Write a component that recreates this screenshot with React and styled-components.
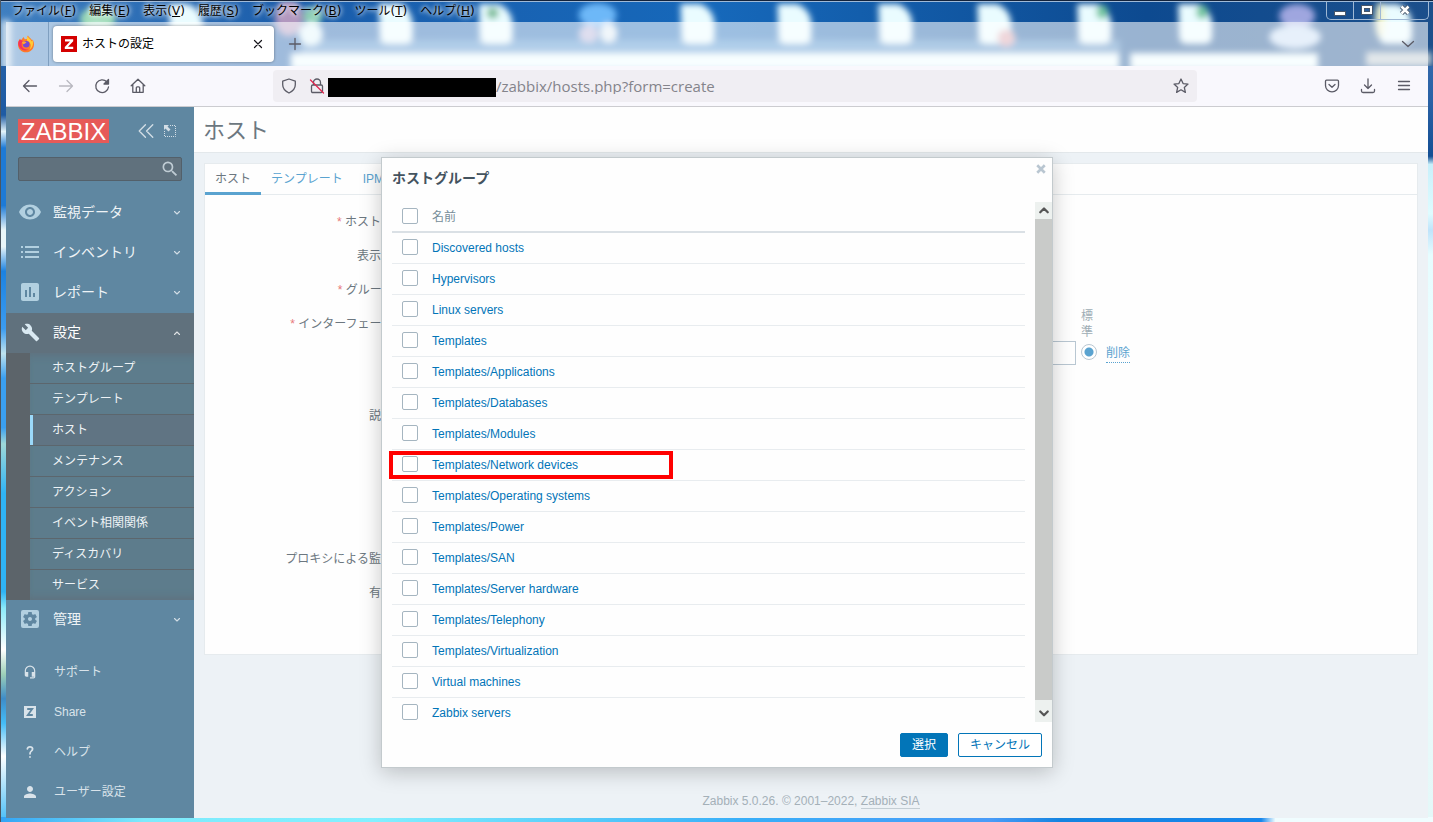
import React from 'react'
import styled, {createGlobalStyle, css} from 'styled-components'
import {
  MdAssessment,
  MdBuild,
  MdHeadsetMic,
  MdPerson,
  MdSearch,
  MdSettingsApplications,
  MdVisibility,
} from 'react-icons/md'


const theme = {
  sidebar: '#5f87a1',
  sidebarActive: '#60717d',
  sidebarSub: '#5d7c8c',
  sidebarGutter: '#5c646a',
  sidebarIcon: '#b2d0e0',
  page: '#edf2f6',
  panel: '#fefefe',
  line: '#e6ebee',
  text: '#6c7780',
  link: '#0275b8',
  linkDimmed: '#5aa3d0',
  required: '#e8797b',
  toolbar: '#f9f8fd',
  toolbarIcon: '#5b5b66',
}

const fonts = {
  page: '"Liberation Sans", "Noto Sans CJK JP", sans-serif',
  chrome: '"Open Sans", "Noto Sans CJK JP", sans-serif',
  menu: '"DejaVu Sans", "Noto Sans CJK JP", sans-serif',
}

const GlobalStyle = createGlobalStyle`
  * {
    box-sizing: border-box;
  }
  body {
    margin: 0;
    font-family: ${fonts.page};
    font-size: 12px;
    line-height: 16px;
  }
  button, input {
    font: inherit;
  }
  ul {
    list-style: none;
    margin: 0;
    padding: 0;
  }
`

const Window = styled.div`
  background:
    linear-gradient(90deg, #33a5f5, #7deafc 10%, #83f0ff 26%, #5fd3fb 38%, #38aef8 52%, #4a9cf8 69%, #1484e0 74%, #1787ec 88%, #f0fdff 89%) bottom / 100% 5px no-repeat,
    linear-gradient(#2c66ab, #1f5ba3 14%, #e4f5fa 16%, #1d7ad6 18%, #1d7ad6 25%, #e9f6f9 28%, #e9f6f9 30%, #1c82e0 33%, #3c9cf0 40%, #bfe3ee 43%, #3a9ff0 46%, #3a9ff0 52%, #9fd8d8 54%, #2fb4f6 60%, #2fb4f6 72%, #8ceafa 74%, #fff 79%, #9ed0b8 82%, #3e8cc8 85%, #45bdf7 88%, #fff 92%, #45bdf7) left / 6px 100% no-repeat,
    linear-gradient(#3f74b4, #2a62a6 12%, #144f94 19%, #c8f0fb 20%, #dffcff 26%, #bfe4fb 28%, #e6fdff 31%, #f2fcfd 60%, #e4f8f8) right / 5px 100% no-repeat;
  border-left: 1px solid #4a5661;
  display: flex;
  flex-direction: column;
  min-height: 100vh;
  padding: 0 5px 4px;
`

// Glass title area

const Glass = styled.header`
  margin: 0 -5px;
  position: relative;
`

const Wallpaper = styled.svg`
  display: block;
  height: 100%;
  left: 0;
  position: absolute;
  top: 0;
  width: 100%;
`

const MenuBar = styled.nav`
  align-items: flex-start;
  display: flex;
  height: 22px;
  padding: 0 0 0 11px;
  position: relative;
`

const MenuButton = styled.button`
  background: none;
  border: 0;
  color: #000;
  font-family: ${fonts.menu};
  height: 22px;
  line-height: 22px;
  margin-right: 13px;
  padding: 0;
  text-shadow: 0 0 4px #fff, 0 0 6px #fff;
`

const WindowButtons = styled.div`
  border: 1px solid #9fb8d4;
  border-radius: 0 0 5px 5px;
  border-top: 0;
  display: flex;
  height: 19px;
  margin: 1px 4px 0 auto;
`

const WindowButton = styled.button`
  align-items: center;
  background: none;
  border: 0;
  border-right: 1px solid #9fb8d4;
  display: flex;
  justify-content: center;
  padding: 0;
  width: ${props => props.$wide ? '47px' : '27px'};
  &:last-child {
    border-right: 0;
  }
`

const TabStrip = styled.div`
  align-items: center;
  background: rgba(255, 255, 255, 0.58);
  display: flex;
  height: 44px;
  margin: 0 5px;
  position: relative;
`

const PinnedTab = styled.button`
  background: none;
  border: 0;
  border-right: 1px solid #7f9fc0;
  height: 44px;
  padding: 0;
  width: 43px;
  & svg {
    display: block;
    margin: 0 0 0 11px;
  }
`

const Tab = styled.div`
  align-items: center;
  background: #fff;
  border-radius: 4px;
  box-shadow: 0 0 3px rgba(0, 0, 0, 0.4);
  display: flex;
  font-family: ${fonts.menu};
  gap: 5px;
  height: 36px;
  margin-left: 4px;
  padding: 0 8px;
  width: 221px;
`

const Favicon = styled.svg`
  background: #d40000;
  flex: none;
`

const PlainButton = styled.button`
  align-items: center;
  background: none;
  border: 0;
  color: ${props => props.$color || theme.toolbarIcon};
  display: flex;
  flex: none;
  height: ${props => props.$size || 32}px;
  justify-content: center;
  margin-left: ${props => props.$push ? 'auto' : 0};
  padding: 0;
  width: ${props => props.$size || 32}px;
  &:disabled {
    opacity: 0.4;
  }
`

const TabTitle = styled.span`
  flex: 1;
  line-height: 18px;
`

const Toolbar = styled.div`
  align-items: center;
  background: ${theme.toolbar};
  border-bottom: 1px solid #ccccd0;
  display: flex;
  gap: 4px;
  height: 41px;
  padding: 0 8px;
`

const AddressBar = styled.div`
  align-items: center;
  background: #f0eef3;
  border-radius: 4px;
  display: flex;
  flex: 1;
  height: 32px;
  margin: 0 115px;
`

const Redacted = styled.div`
  background: #000;
  flex: none;
  height: 19px;
  margin-top: 2px;
  width: 168px;
`

const AddressInput = styled.input`
  background: none;
  border: 0;
  color: #84848b;
  flex: 1;
  font-family: ${fonts.chrome};
  font-size: 15px;
  min-width: 0;
  outline: none;
  padding: 0;
`

// Page

const Page = styled.div`
  display: flex;
  flex: 1;
  position: relative;
`

const Sidebar = styled.aside`
  background: ${theme.sidebar};
  color: #eef3f6;
  flex: none;
  padding-bottom: 6px;
  width: 188px;
`

const SidebarHead = styled.div`
  align-items: center;
  display: flex;
  height: 50px;
  padding: 0 12px 2px;
  & ${PlainButton} {
    color: #d3dee6;
  }
`

const Logo = styled.a`
  background: #e65a58;
  color: #fff;
  flex: none;
  font-size: 24px;
  height: 24px;
  line-height: 25px;
  margin-right: 25px;
  text-align: center;
  text-decoration: none;
  width: 91px;
`

const Search = styled.form`
  align-items: center;
  background: ${theme.sidebarActive};
  border: 1px solid #53606a;
  border-radius: 2px;
  display: flex;
  height: 24px;
  margin: 0 12px 12px;
  & input {
    background: none;
    border: 0;
    color: #fff;
    flex: 1;
    min-width: 0;
    outline: none;
  }
  & ${PlainButton} {
    color: #bfccd4;
  }
`

const NavLink = styled.a`
  align-items: center;
  background: ${props => props.$active ? theme.sidebarActive : 'none'};
  color: ${props => props.$active ? '#fff' : '#eef3f6'};
  display: flex;
  font-size: 14px;
  height: 40px;
  padding: 0 13px 2px 12px;
  text-decoration: none;
  & > svg:last-child {
    margin: 2px 0 0 auto;
    opacity: 0.8;
  }
`

const IconSlot = styled.span`
  color: ${props => props.$color};
  display: flex;
  flex: none;
  justify-content: center;
  width: 24px;
`

const NavText = styled.span`
  margin-left: 11px;
`

const SubMenu = styled.ul`
  background: ${theme.sidebarSub};
  border-left: 24px solid ${theme.sidebarGutter};
  box-shadow: inset 0 8px 8px -6px ${theme.sidebarActive}, inset 0 -8px 8px -6px ${theme.sidebarActive};
`

const SubLink = styled.a`
  border-bottom: 1px solid #5c666d;
  color: #eef3f6;
  display: block;
  height: 31px;
  line-height: 31px;
  padding-left: 22px;
  text-decoration: none;
  ${props => props.$active && css`
    background: #607483;
    box-shadow: inset 3px 0 0 #9bd9fa;
  `}
  li:last-child > & {
    border-bottom: 0;
    height: 30px;
  }
`

const SupportMenu = styled.ul`
  margin-top: 12px;
`

const SupportLink = styled.a`
  align-items: center;
  color: #d9e3ea;
  display: flex;
  gap: 12px;
  height: 40px;
  padding: 0 12px;
  text-decoration: none;
`

const Main = styled.main`
  background: ${theme.page};
  color: ${theme.text};
  display: flex;
  flex: 1;
  flex-direction: column;
  min-width: 0;
`

const PageTitle = styled.h1`
  background: ${theme.panel};
  border-bottom: 1px solid #e3e8eb;
  font-size: 22px;
  font-weight: 400;
  height: 46px;
  line-height: 48px;
  margin: 0 0 10px;
  padding: 0 9px;
`

const Panel = styled.section`
  background: ${theme.panel};
  border: 1px solid ${theme.line};
  margin: 0 10px;
  padding-bottom: 45px;
`

const Tabs = styled.nav`
  border-bottom: 1px solid ${theme.line};
  display: flex;
  height: 31px;
  margin-bottom: 9px;
`

const FormTab = styled.a`
  border-bottom: 3px solid ${props => props.$active ? theme.linkDimmed : 'transparent'};
  color: ${props => props.$active ? theme.text : theme.linkDimmed};
  height: 31px;
  line-height: 31px;
  padding: 0 10px;
  text-decoration: none;
`

const FormRow = styled.div`
  display: flex;
  gap: 10px;
  height: ${props => props.$height || 34}px;
`

const FormLabel = styled.label`
  flex: none;
  line-height: 36px;
  text-align: right;
  width: 188px;
  white-space: nowrap;
  ${props => props.$required && css`
    &::before {
      color: ${theme.required};
      content: '* ';
    }
  `}
`

const Interface = styled.div`
  align-items: flex-end;
  display: flex;
  gap: 5px;
  height: 59px;
  width: 727px;
`

const PortInput = styled.input`
  background: #fff;
  border: 1px solid #b9c7d2;
  flex: 1;
  height: 24px;
  min-width: 0;
  padding: 0 4px;
`

const DefaultColumn = styled.label`
  align-items: center;
  color: #9fadb5;
  display: flex;
  flex-direction: column;
  gap: 4px;
  width: 16px;
  & span {
    margin-right: 4px;
    width: 12px;
  }
`

const Radio = styled.input`
  appearance: none;
  background: radial-gradient(circle, ${theme.linkDimmed} 4px, #fff 5px);
  border: 1px solid #b9c7d2;
  border-radius: 50%;
  flex: none;
  height: 16px;
  margin: 0 0 5px;
  width: 16px;
`

const RemoveLink = styled.a`
  border-bottom: 1px dotted ${theme.linkDimmed};
  color: ${theme.linkDimmed};
  line-height: 18px;
  margin: 0 0 2px 4px;
  text-decoration: none;
`

const Footer = styled.footer`
  color: #a4b0b8;
  margin-top: auto;
  padding-bottom: 9px;
  text-align: center;
  & a {
    border-bottom: 1px solid #c4ced4;
    color: inherit;
    text-decoration: none;
  }
`

// Host group dialog

const Backdrop = styled.div`
  align-items: center;
  display: flex;
  inset: 0;
  justify-content: center;
  position: absolute;
`

const Dialog = styled.div`
  background: #fefefe;
  border: 1px solid #c3cacd;
  box-shadow: 0 4px 20px rgba(0, 0, 0, 0.22);
  max-width: 100%;
  width: 672px;
`

const DialogHead = styled.div`
  display: flex;
  height: 44px;
  justify-content: space-between;
  padding: 3px 3px 0 10px;
`

const DialogTitle = styled.h2`
  color: #44535f;
  font-size: 14px;
  line-height: 20px;
  margin: 7px 0 0;
`

const ScrollArea = styled.div`
  display: flex;
  height: 520px;
`

const TableBox = styled.div`
  flex: 1;
  overflow: hidden;
  padding: 0 10px;
`

const GroupTable = styled.table`
  border-collapse: separate;
  border-spacing: 0;
  text-align: left;
  width: 100%;
  & th {
    border-bottom: 2px solid #dae0e5;
    color: #768d99;
    font-weight: 400;
    height: 31px;
    padding: 0;
  }
  & td {
    border-bottom: 1px solid #e8ecef;
    height: 31px;
    padding: 0;
    position: relative;
  }
  & th:first-child, & td:first-child {
    padding: 0 0 2px 10px;
    width: 40px;
  }
`

const GroupLink = styled.a`
  color: ${theme.link};
  text-decoration: none;
`

const Checkbox = styled.input`
  appearance: none;
  background: #fff;
  border: 1px solid #a5b5c0;
  border-radius: 2px;
  display: block;
  height: 16px;
  margin: 0;
  width: 16px;
`

const Highlight = styled.div`
  border: 4px solid #f00;
  height: 28px;
  left: -3px;
  pointer-events: none;
  position: absolute;
  top: 1px;
  width: 284px;
  z-index: 1;
`

const ScrollBar = styled.div`
  background: #c9cbc9;
  display: flex;
  flex-direction: column;
  justify-content: space-between;
  width: 17px;
`

const ScrollButton = styled.button`
  align-items: flex-end;
  background: #edf1ef;
  border: 0;
  color: #555;
  display: flex;
  height: ${props => props.$tall ? '22px' : '17px'};
  justify-content: center;
  padding: 0 0 3px;
  width: 17px;
`

const DialogButtons = styled.div`
  display: flex;
  gap: 10px;
  justify-content: flex-end;
  padding: 11px 10px 10px;
`

const Button = styled.button`
  background: ${props => props.$primary ? theme.link : '#fff'};
  border: 1px solid ${theme.link};
  border-radius: 2px;
  color: ${props => props.$primary ? '#fff' : theme.link};
  height: 24px;
  line-height: 22px;
  padding: 0 11px;
`


const Stroke = ({size = 16, width = 1.3, children, ...rest}) => (
  <svg width={size} height={size} viewBox="0 0 16 16" fill="none" stroke="currentColor"
    strokeWidth={width} strokeLinecap="round" strokeLinejoin="round" {...rest}>
    {children}
  </svg>
)

const Chevron = ({up}) => (
  <Stroke size={8} width={2.2}>
    <path d={up ? 'M3 11l5-5 5 5' : 'M3 5l5 5 5-5'} />
  </Stroke>
)

const FirefoxIcon = () => (
  <svg width="18" height="18" viewBox="0 0 18 18">
    <path d="M9 17.2c-4.6 0-8-3.4-8-7.8 0-2.200.7-4.200 2-5.600l.8 1.600C4.800 4 5.800 3.300 6.200 2c.8.600 1.200 1.300 1.500 2.200L10 4c-.5-1.500.1-2.700 1-3.500.5 2 3 2.600 4.200 5l.4-1c1 1.600 1.400 3.200 1.400 4.900 0 4.400-3.500 7.800-8 7.800z" fill="#ff7a29" />
    <path d="M10.500 1c.5 1.700 3.300 3 4.200 5.400l.9-1.300c1.400 4.600-.6 8.400-3.400 9.600 2.800-3.500 1.600-7.400-2-9-.6-1.300-.4-3.600.3-4.700z" fill="#ffcb36" />
    <path d="M1.200 8.500c.4 5.400 5.500 8.500 10.500 6-2 .2-6 .2-7-4.200-.4-1.800.3-3.200 1.300-4.300L3 4.500c-1 .8-1.700 2.300-1.800 4z" fill="#f5335b" />
    <circle cx="9.200" cy="9.300" r="3.300" fill="#7448d6" />
    <path d="M4.800 7c1.800-1 3.800-.6 4.700.8-1.400 0-1.600 1.700-3.400 1.500z" fill="#ffa436" />
  </svg>
)

const WallpaperArt = () => (
  <Wallpaper viewBox="0 0 1433 66" preserveAspectRatio="none" aria-hidden="true">
    <defs>
      <linearGradient id="sky" x1="0" x2="1" y1="0" y2="0">
        <stop offset="0" stopColor="#3f7fc0" />
        <stop offset="0.2" stopColor="#1b5dab" />
        <stop offset="0.5" stopColor="#1668ba" />
        <stop offset="0.8" stopColor="#0d4a90" />
        <stop offset="1" stopColor="#1c4f8b" />
      </linearGradient>
      <filter id="soft" x="-30%" y="-30%" width="160%" height="160%">
        <feGaussianBlur stdDeviation="3" />
      </filter>
    </defs>
    <rect width="1433" height="66" fill="url(#sky)" />
    <g filter="url(#soft)">
      <path d="M300 40H1120V66H300z" fill="#6fb2e4" opacity="0.5" />
      <path d="M290 53H1119V70H290zM1130 53H1318V70H1130z" fill="#eefdff" />
      {[185, 395, 495, 697, 794, 895, 994, 1094, 1195, 1395].map(x => (
        <path key={x} d={`M${x - 17} 4h20q14 6 14 22v10q0 8-8 8h-17q-8 0-8-8z`} fill="#eafcff" />
      ))}
      <ellipse cx="97" cy="19" rx="18" ry="12" fill="#9fdcb8" />
      <ellipse cx="97" cy="34" rx="17" ry="10" fill="#dff5f5" />
      <ellipse cx="288" cy="18" rx="14" ry="18" fill="#d8a6c4" opacity="0.8" />
      <ellipse cx="312" cy="16" rx="10" ry="9" fill="#8fd0b5" />
      <ellipse cx="310" cy="34" rx="12" ry="12" fill="#dff5fb" />
      <ellipse cx="492" cy="13" rx="6" ry="6" fill="#7bbd9a" />
      <ellipse cx="597" cy="15" rx="19" ry="12" fill="#6db8f8" />
      <ellipse cx="588" cy="34" rx="10" ry="9" fill="#b2b0d8" />
      <ellipse cx="608" cy="33" rx="9" ry="10" fill="#ddeaf4" />
      <ellipse cx="1006" cy="38" rx="9" ry="9" fill="#d99fa9" />
      <ellipse cx="1102" cy="12" rx="6" ry="7" fill="#6fc49e" />
      <ellipse cx="1202" cy="12" rx="6" ry="7" fill="#6fc49e" />
      <ellipse cx="1297" cy="16" rx="18" ry="12" fill="#9fa6df" />
      <ellipse cx="1295" cy="37" rx="26" ry="12" fill="#c5dcf5" />
      <ellipse cx="1380" cy="20" rx="5" ry="18" fill="#f2f4cf" />
      <rect x="1366" y="52" width="66" height="14" fill="#b9c6cd" />
      <rect x="0" y="20" width="10" height="50" fill="#c9dcec" />
    </g>
    <path d="M0 0H1433V1H0z" fill="#13233c" />
    <path d="M0 1H1433V2H0z" fill="#9fbad8" />
  </Wallpaper>
)

const menus = [
  ['ファイル', 'F'],
  ['編集', 'E'],
  ['表示', 'V'],
  ['履歴', 'S'],
  ['ブックマーク', 'B'],
  ['ツール', 'T'],
  ['ヘルプ', 'H'],
]

const Browser = () => (
  <>
    <Glass>
      <WallpaperArt />
      <MenuBar>
        {menus.map(([label, key]) => (
          <MenuButton key={key}>{label}(<u>{key}</u>)</MenuButton>
        ))}
        <WindowButtons>
          <WindowButton aria-label="最小化">
            <svg width="12" height="14"><rect x="0.500" y="8.500" width="11" height="4" fill="#fff" stroke="#47566a" /></svg>
          </WindowButton>
          <WindowButton aria-label="最大化">
            <svg width="12" height="10">
              <rect x="0.500" y="0.500" width="11" height="9" fill="#fff" stroke="#47566a" />
              <rect x="3.500" y="3.500" width="5" height="3" fill="#2b5f9e" stroke="#47566a" />
            </svg>
          </WindowButton>
          <WindowButton $wide aria-label="閉じる">
            <svg width="12" height="12"><path d="M2.500 2.500L9.500 9.500M9.500 2.500L2.500 9.500" stroke="#47566a" strokeWidth="4.500" /><path d="M2.500 2.500L9.500 9.500M9.500 2.500L2.500 9.500" stroke="#fff" strokeWidth="2.500" /></svg>
          </WindowButton>
        </WindowButtons>
      </MenuBar>
      <TabStrip>
        <PinnedTab aria-label="Firefox"><FirefoxIcon /></PinnedTab>
        <Tab>
          <Favicon width="16" height="16" viewBox="0 0 16 16">
            <path d="M4 3.200H12.200V5.200L7 10.800H12.200V13H3.800V11L9 5.400H4z" fill="#fff" />
          </Favicon>
          <TabTitle>ホストの設定</TabTitle>
          <PlainButton $size={16} $color="#15141a" aria-label="タブを閉じる">
            <Stroke width={1.2}><path d="M4.500 4.500l7 7M11.500 4.500l-7 7" /></Stroke>
          </PlainButton>
        </Tab>
        <PlainButton $size={42} aria-label="新しいタブ">
          <Stroke width={1.3}><path d="M8 2.500v11M2.500 8h11" /></Stroke>
        </PlainButton>
        <PlainButton $push $size={40} aria-label="タブの一覧">
          <Stroke><path d="M2.500 5.500L8 10.500l5.500-5" /></Stroke>
        </PlainButton>
      </TabStrip>
    </Glass>
    <Toolbar>
      <PlainButton aria-label="戻る">
        <Stroke><path d="M1.500 8h13M7 2.500L1.500 8 7 13.500" /></Stroke>
      </PlainButton>
      <PlainButton disabled aria-label="進む">
        <Stroke><path d="M14.500 8h-13M9 2.500L14.500 8 9 13.500" /></Stroke>
      </PlainButton>
      <PlainButton aria-label="再読み込み">
        <Stroke><path d="M12.800 3.800A6.400 6.400 0 1 0 14.500 9" /><path d="M14.500 1.500v4.500H10z" fill="currentColor" /></Stroke>
      </PlainButton>
      <PlainButton aria-label="ホーム">
        <Stroke><path d="M1.200 7.800L8 1.200l6.800 6.600M2.800 6.500v7.800h10.400V6.500M6.300 14V9.800q0-1 1-1h1.400q1 0 1 1V14" /></Stroke>
      </PlainButton>
      <AddressBar>
        <PlainButton aria-label="トラッキング防止">
          <Stroke><path d="M8 1l6.300 2.200v3.600c0 3.800-2.600 6.500-6.300 8.200-3.700-1.700-6.300-4.400-6.300-8.200V3.200z" /></Stroke>
        </PlainButton>
        <PlainButton $size={23} aria-label="保護されていない接続">
          <Stroke><path d="M4.500 7V4.500a3.500 3.500 0 0 1 7 0V7M3.800 7h8.400q1.300 0 1.300 1.300v4.900q0 1.300-1.300 1.300H3.800q-1.300 0-1.300-1.300V8.300Q2.500 7 3.800 7z" /><path d="M1.500 2L14.500 15" stroke="#e22850" /></Stroke>
        </PlainButton>
        <Redacted />
        <AddressInput aria-label="アドレス" defaultValue="/zabbix/hosts.php?form=create" />
        <PlainButton aria-label="ブックマークに追加">
          <Stroke><path d="M8 1l2.100 4.600 4.900.5-3.700 3.300 1.100 5L8 11.800l-4.400 2.600 1.100-5L1 6.100l4.900-.5z" /></Stroke>
        </PlainButton>
      </AddressBar>
      <PlainButton aria-label="Pocket">
        <Stroke><path d="M2.500 2.200h11q1 0 1 1v4.300a6.500 6.300 0 0 1-13 0V3.200q0-1 1-1zM5 6.500l3 2.800 3-2.800" /></Stroke>
      </PlainButton>
      <PlainButton aria-label="ダウンロード">
        <Stroke><path d="M8 .8v9.700M4.500 7L8 10.500 11.500 7M1.500 11.500v1.500q0 1.500 1.500 1.500h10q1.500 0 1.500-1.500v-1.500" /></Stroke>
      </PlainButton>
      <PlainButton aria-label="メニュー">
        <Stroke><path d="M2.500 3.500h11M2.500 7.500h11M2.500 11.500h11" /></Stroke>
      </PlainButton>
    </Toolbar>
  </>
)

const subItems = [
  'ホストグループ',
  'テンプレート',
  'ホスト',
  'メンテナンス',
  'アクション',
  'イベント相関関係',
  'ディスカバリ',
  'サービス',
]

const NavItem = ({icon: Icon, size = 24, label, active}) => (
  <NavLink href="#" $active={active}>
    <IconSlot $color={active ? '#d9e9f2' : theme.sidebarIcon}><Icon size={size} /></IconSlot>
    <NavText>{label}</NavText>
    <Chevron up={active} />
  </NavLink>
)

const ListIcon = () => (
  <svg width="18" height="12" viewBox="0 0 18 12" fill="currentColor">
    <path d="M0 0h2v2H0zM4 0h14v2H4zM0 5h2v2H0zM4 5h14v2H4zM0 10h2v2H0zM4 10h14v2H4z" />
  </svg>
)

const ShareIcon = () => (
  <svg width="12" height="12" viewBox="0 0 12 12">
    <path d="M0 0H12V12H0z" fill="currentColor" />
    <path d="M3.200 3H8.200L3.800 9H8.800" fill="none" stroke={theme.sidebar} strokeWidth="1.800" />
  </svg>
)

const HelpIcon = () => (
  <Stroke size={14} width={2}>
    <path d="M5 4.500Q5.300 2 8 2t3 2.400Q11 6 9.500 7T8 10M8 13.500v.3" />
  </Stroke>
)

const supportItems = [
  ['サポート', <MdHeadsetMic size={14} />],
  ['Share', <ShareIcon />],
  ['ヘルプ', <HelpIcon />],
  ['ユーザー設定', <MdPerson size={18} />],
]

const PageSidebar = () => (
  <Sidebar>
    <SidebarHead>
      <Logo href="#">ZABBIX</Logo>
      <PlainButton $size={24} aria-label="サイドバーを縮小">
        <Stroke size={18} width={1.2}><path d="M7.500 2.500L2 8l5.500 5.500M14 2.500L8.500 8l5.500 5.500" /></Stroke>
      </PlainButton>
      <PlainButton $size={24} aria-label="サイドバーを隠す">
        <svg width="14" height="14" viewBox="0 0 14 14" fill="none" stroke="currentColor">
          <path d="M7 1.500H12.500V12.500H1.500V7" strokeDasharray="1 1" />
          <path d="M1 1h5L4.500 2.500 7.500 5.500 5.500 7.500 2.500 4.500 1 6z" fill="currentColor" stroke="none" />
        </svg>
      </PlainButton>
    </SidebarHead>
    <Search>
      <input aria-label="検索" />
      <PlainButton $size={22} aria-label="検索"><MdSearch size={20} /></PlainButton>
    </Search>
    <NavItem icon={MdVisibility} label="監視データ" />
    <NavItem icon={ListIcon} label="インベントリ" />
    <NavItem icon={MdAssessment} label="レポート" />
    <NavItem icon={MdBuild} size={19} label="設定" active />
    <SubMenu>
      {subItems.map(item => (
        <li key={item}><SubLink href="#" $active={item === 'ホスト'}>{item}</SubLink></li>
      ))}
    </SubMenu>
    <NavItem icon={MdSettingsApplications} label="管理" />
    <SupportMenu>
      {supportItems.map(([label, icon]) => (
        <li key={label}>
          <SupportLink href="#"><IconSlot>{icon}</IconSlot>{label}</SupportLink>
        </li>
      ))}
    </SupportMenu>
  </Sidebar>
)

const HostForm = () => (
  <Main>
    <PageTitle>ホスト</PageTitle>
    <Panel>
      <Tabs>
        <FormTab href="#" $active>ホスト</FormTab>
        <FormTab href="#">テンプレート</FormTab>
        <FormTab href="#">IPMI</FormTab>
      </Tabs>
      <FormRow><FormLabel $required>ホスト名</FormLabel></FormRow>
      <FormRow><FormLabel>表示名</FormLabel></FormRow>
      <FormRow><FormLabel $required>グループ</FormLabel></FormRow>
      <FormRow $height={92}>
        <FormLabel $required htmlFor="port">インターフェース</FormLabel>
        <Interface>
          <PortInput id="port" />
          <DefaultColumn>
            <span>標準</span>
            <Radio type="radio" name="default" defaultChecked />
          </DefaultColumn>
          <RemoveLink href="#">削除</RemoveLink>
        </Interface>
      </FormRow>
      <FormRow $height={143}><FormLabel>説明</FormLabel></FormRow>
      <FormRow><FormLabel>プロキシによる監視</FormLabel></FormRow>
      <FormRow><FormLabel>有効</FormLabel></FormRow>
    </Panel>
    <Footer>Zabbix 5.0.26. © 2001–2022, <a href="#">Zabbix SIA</a></Footer>
  </Main>
)

const groups = [
  'Discovered hosts',
  'Hypervisors',
  'Linux servers',
  'Templates',
  'Templates/Applications',
  'Templates/Databases',
  'Templates/Modules',
  'Templates/Network devices',
  'Templates/Operating systems',
  'Templates/Power',
  'Templates/SAN',
  'Templates/Server hardware',
  'Templates/Telephony',
  'Templates/Virtualization',
  'Virtual machines',
  'Zabbix servers',
]

const GroupDialog = () => (
  <Backdrop>
    <Dialog role="dialog" aria-labelledby="dialog-title">
      <DialogHead>
        <DialogTitle id="dialog-title">ホストグループ</DialogTitle>
        <PlainButton $size={16} aria-label="閉じる">
          <Stroke size={12} width={3.5} stroke="#b9c6d1" strokeLinecap="butt"><path d="M3 3l10 10M13 3L3 13" /></Stroke>
        </PlainButton>
      </DialogHead>
      <ScrollArea>
        <TableBox>
          <GroupTable>
            <thead>
              <tr>
                <th><Checkbox type="checkbox" aria-label="すべて選択" /></th>
                <th>名前</th>
              </tr>
            </thead>
            <tbody>
              {groups.map(group => (
                <tr key={group}>
                  <td>
                    {group === 'Templates/Network devices' && <Highlight />}
                    <Checkbox type="checkbox" aria-label={group} />
                  </td>
                  <td><GroupLink href="#">{group}</GroupLink></td>
                </tr>
              ))}
            </tbody>
          </GroupTable>
        </TableBox>
        <ScrollBar>
          <ScrollButton aria-label="上へ">
            <Stroke size={12} width={3}><path d="M3 11l5-5 5 5" /></Stroke>
          </ScrollButton>
          <ScrollButton $tall aria-label="下へ">
            <Stroke size={12} width={3}><path d="M3 6l5 5 5-5" /></Stroke>
          </ScrollButton>
        </ScrollBar>
      </ScrollArea>
      <DialogButtons>
        <Button $primary>選択</Button>
        <Button>キャンセル</Button>
      </DialogButtons>
    </Dialog>
  </Backdrop>
)

const App = () => (
  <>
    <GlobalStyle />
    <Window>
      <Browser />
      <Page>
        <PageSidebar />
        <HostForm />
        <GroupDialog />
      </Page>
    </Window>
  </>
)

export default App
